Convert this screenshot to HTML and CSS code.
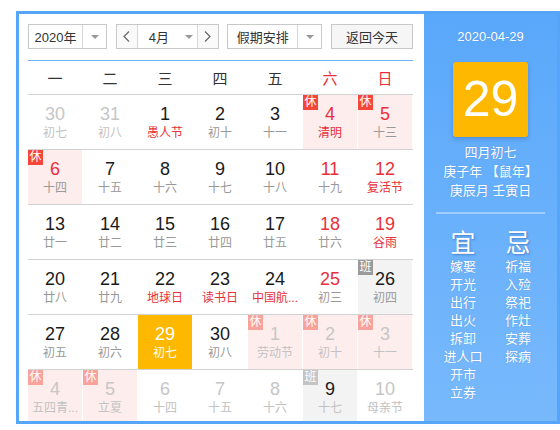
FILE: index.html
```html
<!DOCTYPE html>
<html lang="zh-CN">
<head>
<meta charset="utf-8">
<title>万年历</title>
<link rel="stylesheet" href="styles.css">
</head>
<body>
<div class="cal">
  <div class="main">
    <div class="toolbar">
      <div class="sel sel-year">
        <span class="sel-text">2020年</span>
        <span class="sel-arrow"><i class="caret"></i></span>
      </div>
      <div class="sel sel-month">
        <span class="nav"><svg width="7" height="11" viewBox="0 0 7 11"><polyline points="6,0.5 1,5.5 6,10.5" fill="none" stroke="#666" stroke-width="1.2"/></svg></span>
        <span class="month-mid"><span class="month-text">4月</span><i class="caret"></i></span>
        <span class="nav nav-next"><svg width="7" height="11" viewBox="0 0 7 11"><polyline points="1,0.5 6,5.5 1,10.5" fill="none" stroke="#666" stroke-width="1.2"/></svg></span>
      </div>
      <div class="sel sel-hol">
        <span class="sel-text">假期安排</span>
        <span class="sel-arrow"><i class="caret"></i></span>
      </div>
      <div class="btn-today">返回今天</div>
    </div>

    <div class="week">
      <span>一</span><span>二</span><span>三</span><span>四</span><span>五</span><span class="red">六</span><span class="red">日</span>
    </div>

    <div class="row">
      <div class="cell other"><div class="num">30</div><div class="lun">初七</div></div>
      <div class="cell other"><div class="num">31</div><div class="lun">初八</div></div>
      <div class="cell"><div class="num">1</div><div class="lun fest">愚人节</div></div>
      <div class="cell"><div class="num">2</div><div class="lun">初十</div></div>
      <div class="cell"><div class="num">3</div><div class="lun">十一</div></div>
      <div class="cell hol"><span class="badge">休</span><div class="num red">4</div><div class="lun fest">清明</div></div>
      <div class="cell hol"><span class="badge">休</span><div class="num red">5</div><div class="lun">十三</div></div>
    </div>

    <div class="row">
      <div class="cell hol"><span class="badge">休</span><div class="num red">6</div><div class="lun">十四</div></div>
      <div class="cell"><div class="num">7</div><div class="lun">十五</div></div>
      <div class="cell"><div class="num">8</div><div class="lun">十六</div></div>
      <div class="cell"><div class="num">9</div><div class="lun">十七</div></div>
      <div class="cell"><div class="num">10</div><div class="lun">十八</div></div>
      <div class="cell"><div class="num red">11</div><div class="lun">十九</div></div>
      <div class="cell"><div class="num red">12</div><div class="lun fest">复活节</div></div>
    </div>

    <div class="row">
      <div class="cell"><div class="num">13</div><div class="lun">廿一</div></div>
      <div class="cell"><div class="num">14</div><div class="lun">廿二</div></div>
      <div class="cell"><div class="num">15</div><div class="lun">廿三</div></div>
      <div class="cell"><div class="num">16</div><div class="lun">廿四</div></div>
      <div class="cell"><div class="num">17</div><div class="lun">廿五</div></div>
      <div class="cell"><div class="num red">18</div><div class="lun">廿六</div></div>
      <div class="cell"><div class="num red">19</div><div class="lun fest">谷雨</div></div>
    </div>

    <div class="row">
      <div class="cell"><div class="num">20</div><div class="lun">廿八</div></div>
      <div class="cell"><div class="num">21</div><div class="lun">廿九</div></div>
      <div class="cell"><div class="num">22</div><div class="lun fest">地球日</div></div>
      <div class="cell"><div class="num">23</div><div class="lun fest">读书日</div></div>
      <div class="cell"><div class="num">24</div><div class="lun fest">中国航...</div></div>
      <div class="cell"><div class="num red">25</div><div class="lun">初三</div></div>
      <div class="cell work"><span class="badge badge-work">班</span><div class="num">26</div><div class="lun">初四</div></div>
    </div>

    <div class="row">
      <div class="cell"><div class="num">27</div><div class="lun">初五</div></div>
      <div class="cell"><div class="num">28</div><div class="lun">初六</div></div>
      <div class="cell today"><div class="num">29</div><div class="lun">初七</div></div>
      <div class="cell"><div class="num">30</div><div class="lun">初八</div></div>
      <div class="cell other hol"><span class="badge">休</span><div class="num">1</div><div class="lun">劳动节</div></div>
      <div class="cell other hol"><span class="badge">休</span><div class="num">2</div><div class="lun">初十</div></div>
      <div class="cell other hol"><span class="badge">休</span><div class="num">3</div><div class="lun">十一</div></div>
    </div>

    <div class="row">
      <div class="cell other hol"><span class="badge">休</span><div class="num">4</div><div class="lun">五四青...</div></div>
      <div class="cell other hol"><span class="badge">休</span><div class="num">5</div><div class="lun">立夏</div></div>
      <div class="cell other"><div class="num">6</div><div class="lun">十四</div></div>
      <div class="cell other"><div class="num">7</div><div class="lun">十五</div></div>
      <div class="cell other"><div class="num">8</div><div class="lun">十六</div></div>
      <div class="cell other work"><span class="badge badge-work">班</span><div class="num dark">9</div><div class="lun">十七</div></div>
      <div class="cell other"><div class="num">10</div><div class="lun">母亲节</div></div>
    </div>
  </div>

  <div class="side">
    <div class="side-date">2020-04-29</div>
    <div class="big-day">29</div>
    <div class="lunar-info">
      <div>四月初七</div>
      <div>庚子年 【鼠年】</div>
      <div>庚辰月 壬寅日</div>
    </div>
    <div class="side-sep"></div>
    <div class="yiji">
      <div class="col">
        <div class="col-title">宜</div>
        <div>嫁娶</div><div>开光</div><div>出行</div><div>出火</div><div>拆卸</div><div>进人口</div><div>开市</div><div>立券</div>
      </div>
      <div class="col">
        <div class="col-title">忌</div>
        <div>祈福</div><div>入殓</div><div>祭祀</div><div>作灶</div><div>安葬</div><div>探病</div>
      </div>
    </div>
  </div>
</div>
</body>
</html>
```

FILE: styles.css
```css
html, body {
  margin: 0;
  padding: 0;
  background: #fff;
}
body {
  width: 560px;
  height: 430px;
  overflow: hidden;
  font-family: "Liberation Sans", "Noto Sans CJK SC", sans-serif;
  color: #222;
}
.cal {
  margin: 11px 0 0 16px;
  width: 544px;
  height: 413px;
  box-sizing: border-box;
  border: 3px solid #55a5fa;
  display: flex;
  overflow: hidden;
}
.main {
  flex: none;
  width: 385px;
  padding: 10px 11px 0 9px;
}

/* toolbar */
.toolbar {
  display: flex;
  justify-content: space-between;
  height: 25px;
  margin-bottom: 11px;
  font-size: 13px;
  color: #333;
}
.sel {
  display: flex;
  box-sizing: border-box;
  height: 25px;
  border: 1px solid #c8c8c8;
  background: #fff;
  align-items: stretch;
}
.sel-year { width: 79px; }
.sel-hol { width: 95px; }
.sel-month { width: 103px; }
.sel-text {
  flex: 1;
  display: flex;
  align-items: center;
  justify-content: center;
}
.sel-arrow {
  width: 23px;
  border-left: 1px solid #d6d6d6;
  display: flex;
  align-items: center;
  justify-content: center;
}
.caret {
  display: block;
  width: 0;
  height: 0;
  border-left: 4px solid transparent;
  border-right: 4px solid transparent;
  border-top: 4px solid #999;
}
.nav {
  width: 20px;
  border-right: 1px solid #d6d6d6;
  background: #fafafa;
  display: flex;
  align-items: center;
  justify-content: center;
}
.nav-next {
  border-right: none;
  border-left: 1px solid #d6d6d6;
}
.month-mid {
  flex: 1;
  display: flex;
  align-items: center;
  padding-left: 11px;
  gap: 16px;
}
.btn-today {
  width: 82px;
  height: 25px;
  box-sizing: border-box;
  border: 1px solid #c8c8c8;
  background: #f6f6f6;
  display: flex;
  align-items: center;
  justify-content: center;
  color: #333;
}

/* week header */
.week {
  display: grid;
  grid-template-columns: repeat(7, 54px);
  column-gap: 1px;
  height: 33px;
  border-top: 1px solid #6cb0f8;
  border-bottom: 1px solid #d2d2d2;
  align-items: center;
  text-align: center;
  font-size: 15px;
  color: #333;
}
.red { color: #e8303a; }

/* rows */
.row {
  display: grid;
  grid-template-columns: repeat(7, 54px);
  column-gap: 1px;
  height: 54px;
  border-bottom: 1px solid #d2d2d2;
}
.cell {
  position: relative;
  text-align: center;
  padding-top: 9px;
  box-sizing: border-box;
  height: 54px;
}
.num {
  font-size: 18px;
  line-height: 20px;
  color: #1a1a1a;
}
.lun {
  font-size: 12px;
  line-height: 16px;
  margin-top: 1px;
  color: #999;
  white-space: nowrap;
}
.num.red { color: #e8303a; }
.lun.fest { color: #e8303a; }
.hol { background: #fdeeed; }
.work { background: #f3f3f3; }
.other .num { color: #c6c6c6; }
.other .lun { color: #c2c2c2; }
.other .num.dark { color: #1a1a1a; }
.today { background: #ffb800; }
.today .num, .today .lun { color: #fff; }

.badge {
  position: absolute;
  left: 0;
  top: 0;
  width: 15px;
  height: 15px;
  background: #f5463a;
  color: #fff;
  font-size: 12px;
  line-height: 15px;
  text-align: center;
}
.badge-work { background: #9a9a9a; }
.other .badge { background: #f8a29c; }
.other .badge-work { background: #c4c4c4; }

/* side panel */
.side {
  flex: none;
  width: 133px;
  background: linear-gradient(#5aa8fb, #78b9fc);
  color: #fff;
  text-align: center;
  padding-top: 13px;
  box-sizing: border-box;
  text-shadow: 0 0 1px rgba(60, 110, 190, 0.5);
}
.side-date {
  font-size: 13px;
  line-height: 20px;
}
.big-day {
  width: 75px;
  height: 75px;
  margin: 15px auto 0;
  background: #ffb800;
  border-radius: 3px;
  box-shadow: 0 2px 4px rgba(40, 80, 150, 0.35);
  font-size: 50px;
  line-height: 75px;
  text-shadow: none;
}
.lunar-info {
  margin-top: 6px;
  font-size: 13px;
  line-height: 19px;
}
.side-sep {
  height: 2px;
  margin: 12px 12px 0;
  background: #9fcdfd;
}
.yiji {
  display: grid;
  grid-template-columns: 55px 55px;
  justify-content: center;
  margin-top: 14px;
  font-size: 13px;
  line-height: 18px;
}
.col-title {
  font-size: 25px;
  line-height: 30px;
  text-shadow: 1px 1px 2px rgba(40, 80, 150, 0.5);
}
```
